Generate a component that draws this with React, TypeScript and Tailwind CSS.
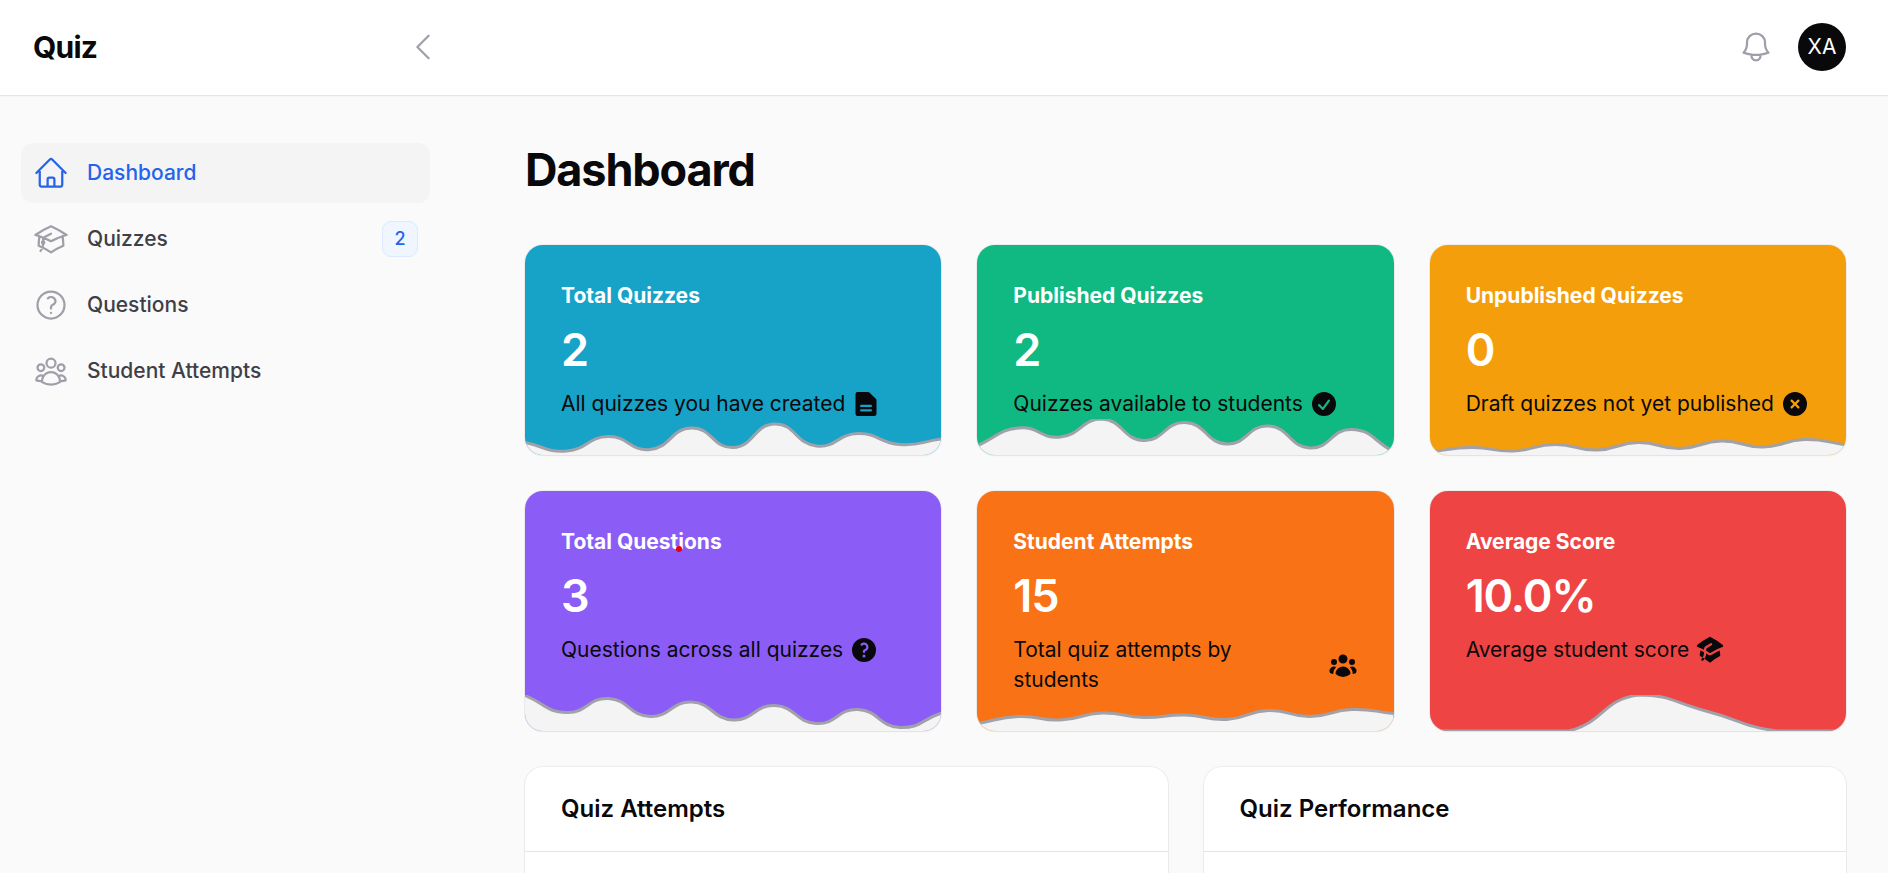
import React from 'react';
import type { IconType } from 'react-icons';
import {
  HiOutlineBell,
  HiOutlineChevronLeft,
  HiOutlineHome,
  HiOutlineQuestionMarkCircle,
  HiOutlineUserGroup,
  HiMiniAcademicCap,
  HiMiniCheckCircle,
  HiMiniDocumentText,
  HiMiniQuestionMarkCircle,
  HiMiniUserGroup,
  HiMiniXCircle,
} from 'react-icons/hi2';

interface NavItem {
  label: string;
  icon: React.ComponentType<{ className?: string }>;
  active?: boolean;
  badge?: number;
}

interface Stat {
  title: string;
  value: string;
  description: string;
  icon: IconType;
  bg: string;
  chart: number[];
}

const AcademicCapIcon = ({ className }: { className?: string }) => (
  <svg
    viewBox="0 0 24 24"
    fill="none"
    stroke="currentColor"
    strokeWidth="1.5"
    strokeLinecap="round"
    strokeLinejoin="round"
    className={className}
    aria-hidden="true"
  >
    <path d="M4.26 10.147a60.438 60.438 0 0 0-.491 6.347A48.62 48.62 0 0 1 12 20.904a48.62 48.62 0 0 1 8.232-4.41 60.46 60.46 0 0 0-.491-6.347m-15.482 0a50.636 50.636 0 0 0-2.658-.813A59.906 59.906 0 0 1 12 3.493a59.903 59.903 0 0 1 10.399 5.84c-.896.248-1.783.52-2.658.814m-15.482 0A50.717 50.717 0 0 1 12 13.489a50.702 50.702 0 0 1 7.74-3.342M6.75 15a.75.75 0 1 0 0-1.5.75.75 0 0 0 0 1.5Zm0 0v-3.675A55.378 55.378 0 0 1 12 8.443m-7.007 11.55A5.981 5.981 0 0 0 6.75 15.75v-1.5" />
  </svg>
);

const navItems: NavItem[] = [
  { label: 'Dashboard', icon: HiOutlineHome, active: true },
  { label: 'Quizzes', icon: AcademicCapIcon, badge: 2 },
  { label: 'Questions', icon: HiOutlineQuestionMarkCircle },
  { label: 'Student Attempts', icon: HiOutlineUserGroup },
];

// chart values are distances from the top of the 36px sparkline area
const stats: Stat[] = [
  {
    title: 'Total Quizzes',
    value: '2',
    description: 'All quizzes you have created',
    icon: HiMiniDocumentText,
    bg: 'bg-[#17a2c8]',
    chart: [23.5, 32, 17.5, 30.5, 9, 28.5, 5, 27, 14.5, 25.5, 20],
  },
  {
    title: 'Published Quizzes',
    value: '2',
    description: 'Quizzes available to students',
    icon: HiMiniCheckCircle,
    bg: 'bg-[#10b981]',
    chart: [27, 9, 18, 0, 21.5, 3.5, 25, 7, 29, 10.5, 32.5],
  },
  {
    title: 'Unpublished Quizzes',
    value: '0',
    description: 'Draft quizzes not yet published',
    icon: HiMiniXCircle,
    bg: 'bg-[#f59e0b]',
    chart: [33, 28.5, 32, 25.5, 31, 23.5, 29.5, 22, 28, 20.5, 26],
  },
  {
    title: 'Total Questions',
    value: '3',
    description: 'Questions across all quizzes',
    icon: HiMiniQuestionMarkCircle,
    bg: 'bg-[#8b5cf6]',
    chart: [0.5, 17.5, 3.5, 21.5, 7, 25, 10.5, 28.5, 14.5, 32.5, 18],
  },
  {
    title: 'Student Attempts',
    value: '15',
    description: 'Total quiz attempts by students',
    icon: HiMiniUserGroup,
    bg: 'bg-[#f97316]',
    chart: [28.5, 21.5, 25, 18, 22.5, 20, 24.5, 15.5, 21.5, 14.5, 18.5],
  },
  {
    title: 'Average Score',
    value: '10.0%',
    description: 'Average student score',
    icon: HiMiniAcademicCap,
    bg: 'bg-[#ef4444]',
    chart: [36, 36, 36, 0, 16.5, 36, 36],
  },
];

const CHART_W = 416;
const CHART_H = 36;
const TENSION = 0.5;

const clamp = (y: number) => Math.min(CHART_H, Math.max(0, y));

// Smooth line through all the points, control points kept inside the chart area
const linePath = (values: number[]) => {
  const pts = values.map((y, i) => ({ x: (i * CHART_W) / (values.length - 1), y }));
  const cps = pts.map((p, i) => {
    const prev = pts[i - 1] ?? p;
    const next = pts[i + 1] ?? p;
    const d01 = Math.hypot(p.x - prev.x, p.y - prev.y);
    const d12 = Math.hypot(next.x - p.x, next.y - p.y);
    const fa = (TENSION * d01) / (d01 + d12);
    const fb = (TENSION * d12) / (d01 + d12);
    return {
      inX: p.x - fa * (next.x - prev.x),
      inY: clamp(p.y - fa * (next.y - prev.y)),
      outX: p.x + fb * (next.x - prev.x),
      outY: clamp(p.y + fb * (next.y - prev.y)),
    };
  });
  let d = `M${pts[0].x} ${pts[0].y}`;
  for (let i = 1; i < pts.length; i++) {
    d += ` C${cps[i - 1].outX} ${cps[i - 1].outY} ${cps[i].inX} ${cps[i].inY} ${pts[i].x} ${pts[i].y}`;
  }
  return d;
};

const Sparkline = ({ values }: { values: number[] }) => {
  const line = linePath(values);
  return (
    <svg
      viewBox={`0 0 ${CHART_W} ${CHART_H}`}
      preserveAspectRatio="none"
      className="absolute inset-x-0 bottom-0 h-9 w-full"
      aria-hidden="true"
    >
      <path d={`${line} V${CHART_H} H0 Z`} fill="#f4f4f5" />
      <path d={line} fill="none" stroke="#a1a1aa" strokeWidth="3" />
    </svg>
  );
};

const StatCard = ({ stat }: { stat: Stat }) => {
  const Icon = stat.icon;
  return (
    <div className={`relative overflow-hidden rounded-[18px] p-9 shadow-xs ring-1 ring-zinc-950/5 ${stat.bg}`}>
      <div className="grid gap-y-3">
        <h2 className="text-[21px] leading-[30px] font-bold text-white">{stat.title}</h2>
        <div className="text-[45px] leading-[54px] font-semibold tracking-tight text-white">{stat.value}</div>
        <div className="flex items-center gap-x-1.5">
          <p className="text-[21px] leading-[30px]">{stat.description}</p>
          <Icon className="size-[30px] shrink-0" />
        </div>
      </div>
      <Sparkline values={stat.chart} />
    </div>
  );
};

const Section = ({ title }: { title: string }) => (
  <section className="rounded-[18px] bg-white shadow-xs ring-1 ring-zinc-950/5">
    <div className="px-9 py-6">
      <h2 className="text-2xl leading-9 font-semibold">{title}</h2>
    </div>
    <div className="h-80 border-t border-zinc-200" />
  </section>
);

const App = () => {
  return (
    <div className="h-screen overflow-hidden bg-[#fafafa] font-['Inter',sans-serif] text-zinc-950">
      {/* Top bar */}
      <header className="relative flex h-[95px] items-center justify-between bg-white pr-[42px] pb-0.5 shadow-xs ring-1 ring-zinc-950/5">
        <div className="flex w-[441px] items-center justify-between pl-[33px]">
          <a href="#" className="text-[30px] leading-[30px] font-bold tracking-tight">Quiz</a>
          <button type="button" aria-label="Collapse sidebar" className="text-zinc-400">
            <HiOutlineChevronLeft className="size-9" />
          </button>
        </div>
        <div className="flex items-center gap-x-6">
          <button type="button" aria-label="Notifications" className="text-zinc-400">
            <HiOutlineBell className="size-9" />
          </button>
          <button type="button" className="size-12 rounded-full bg-zinc-950 text-[21px] text-white">
            XA
          </button>
        </div>
      </header>

      <div className="flex">
        {/* Sidebar */}
        <aside className="w-[480px] shrink-0 py-12 pr-[50px] pl-[21px]">
          <nav>
            <ul className="flex flex-col gap-y-1.5">
              {navItems.map(({ label, icon: Icon, active, badge }) => (
                <li key={label}>
                  <a
                    href="#"
                    className={`flex h-[60px] items-center gap-x-[18px] rounded-xl px-3 ${active ? 'bg-zinc-100' : ''}`}
                  >
                    <Icon className={`size-9 ${active ? 'text-[#2563eb]' : 'text-zinc-400'}`} />
                    <span
                      className={`flex-1 text-[21px] leading-[30px] font-medium ${active ? 'text-[#2563eb]' : 'text-zinc-700'}`}
                    >
                      {label}
                    </span>
                    {badge !== undefined && (
                      <span className="flex size-9 items-center justify-center rounded-[9px] border border-blue-100 bg-blue-50 text-lg font-medium text-[#2563eb]">
                        {badge}
                      </span>
                    )}
                  </a>
                </li>
              ))}
            </ul>
          </nav>
        </aside>

        {/* Page content */}
        <main className="relative flex-1 py-12 pr-[42px] pl-[45px]">
          <h1 className="mb-12 text-[45px] leading-[54px] font-bold tracking-tight">Dashboard</h1>

          <div className="grid grid-cols-3 gap-9">
            {stats.map((stat) => (
              <StatCard key={stat.title} stat={stat} />
            ))}
          </div>

          <div className="mt-9 grid grid-cols-2 gap-9">
            <Section title="Quiz Attempts" />
            <Section title="Quiz Performance" />
          </div>

          {/* Pointer marker */}
          <span className="absolute top-[451px] left-[196px] size-1.5 rounded-full bg-red-600" />
        </main>
      </div>
    </div>
  );
};

export default App;
